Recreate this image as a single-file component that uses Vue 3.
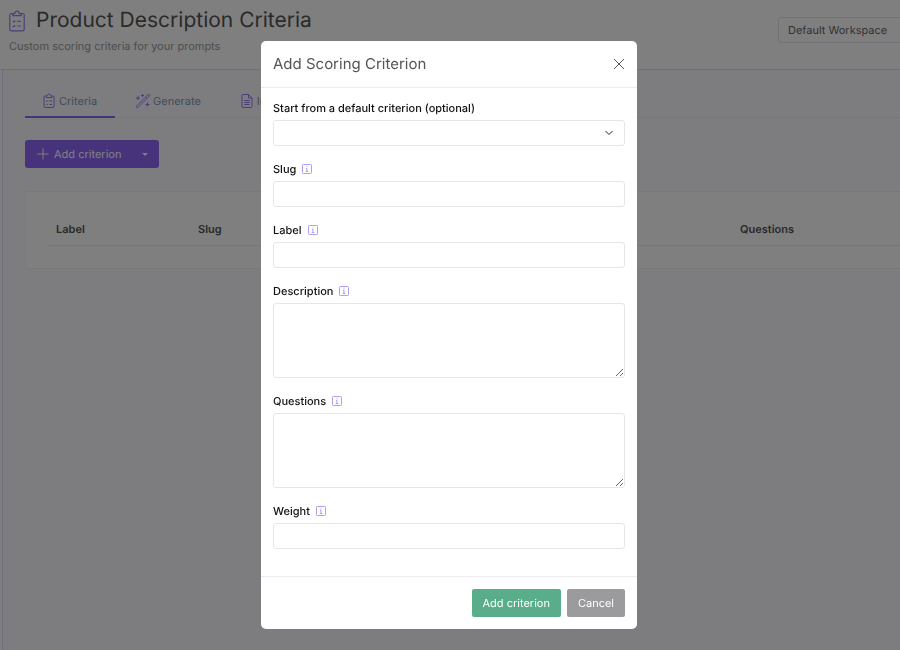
<template>
  <div class="app">
    <div class="page">
      <header class="page-header">
        <div>
          <h1 class="page-title">
            <svg class="title-icon" viewBox="0 0 16 22" aria-hidden="true">
              <path d="M4.500 3.500H2.500a1.700 1.700 0 0 0-1.700 1.700v14a1.700 1.700 0 0 0 1.700 1.700h11a1.700 1.700 0 0 0 1.700-1.700v-14a1.700 1.700 0 0 0-1.700-1.700H11.500M3.800 5.700V4.200L6 3.100a2 2 0 0 1 4 0l2.200 1.100v1.500zM4 11.400l.8.8 1.400-1.700M8.300 11.400h3.500M4 16l.8.8 1.400-1.700M8.300 16h3.500" />
            </svg>
            Product Description Criteria
          </h1>
          <p class="page-subtitle">Custom scoring criteria for your prompts</p>
        </div>
        <select class="workspace" aria-label="Workspace">
          <option>Default Workspace</option>
        </select>
      </header>

      <main class="content">
        <nav class="tabs">
          <a
            v-for="tab in tabs"
            :key="tab.name"
            href="#"
            class="tab"
            :class="tab.name === activeTab ? 'active' : ''"
            @click.prevent="activeTab = tab.name"
          >
            <svg class="tab-icon" viewBox="0 0 16 16" aria-hidden="true">
              <path :d="tab.icon" />
            </svg>
            {{ tab.name }}
          </a>
        </nav>

        <div class="split-button">
          <button type="button" class="split-main" @click="showModal = true">
            <svg class="plus" viewBox="0 0 12 12" aria-hidden="true">
              <path d="M6 .5v11M.5 6h11" />
            </svg>
            Add criterion
          </button>
          <button type="button" class="split-toggle" aria-label="More options">
            <span class="caret"></span>
          </button>
        </div>

        <section class="card">
          <table class="criteria-table">
            <thead>
              <tr>
                <th class="col-label">Label</th>
                <th class="col-slug">Slug</th>
                <th>Questions</th>
              </tr>
            </thead>
          </table>
        </section>
      </main>
    </div>

    <div v-if="showModal" class="backdrop">
      <form
        class="modal"
        role="dialog"
        aria-labelledby="modal-title"
        @submit.prevent="showModal = false"
      >
        <div class="modal-header">
          <h2 id="modal-title" class="modal-title">Add Scoring Criterion</h2>
          <button type="button" class="close" aria-label="Close" @click="showModal = false">
            <svg viewBox="0 0 12 12" aria-hidden="true">
              <path d="M1 1l10 10M11 1L1 11" />
            </svg>
          </button>
        </div>

        <div class="modal-body">
          <div class="field">
            <label for="template">Start from a default criterion (optional)</label>
            <div class="select-wrap">
              <select id="template" v-model="form.template" class="control">
                <option value=""></option>
              </select>
              <svg class="chevron" viewBox="0 0 10 6" aria-hidden="true">
                <path d="M1.500 1L5 4.500 8.500 1" />
              </svg>
            </div>
          </div>

          <div v-for="field in fields" :key="field.id" class="field">
            <label :for="field.id">
              {{ field.label }}
              <svg class="info" viewBox="0 0 10 10" aria-hidden="true">
                <rect x=".5" y=".5" width="9" height="9" rx=".8" />
                <path d="M5 2.300v1M4 4.500h1v3M3.700 7.500h2.600" />
              </svg>
            </label>
            <textarea
              v-if="field.multiline"
              :id="field.id"
              v-model="form[field.id]"
              class="control"
            ></textarea>
            <input v-else :id="field.id" v-model="form[field.id]" type="text" class="control" />
          </div>
        </div>

        <div class="modal-footer">
          <button type="submit" class="btn btn-success">Add criterion</button>
          <button type="button" class="btn btn-secondary" @click="showModal = false">
            Cancel
          </button>
        </div>
      </form>
    </div>
  </div>
</template>

<script setup>
import { reactive, ref } from "vue";

const tabs = [
  {
    name: "Criteria",
    icon: "M5.500 3H4a1 1 0 0 0-1 1v9.500a1 1 0 0 0 1 1h8a1 1 0 0 0 1-1V4a1 1 0 0 0-1-1h-1.500M5 4.500v-1.200l1.500-.8a1.500 1.500 0 0 1 3 0l1.500.8v1.200zM5 8l.7.7L6.800 7.400M8.300 8H11M5 11.500l.7.7 1.100-1.300M8.300 11.500H11",
  },
  {
    name: "Generate",
    icon: "M1.600 13L12.600 2q1.200-1 1.800-.4t-.4 1.800L3 14.400q-.8.6-1.400 0t0-1.400zM10.500 4.200l1.400 1.400M3 3v4M1 5h4M7.500 1v3M6 2.500h3M12.500 9.500v4M10.500 11.500h4",
  },
  {
    name: "Import",
    icon: "M9.500 1.500H4a1 1 0 0 0-1 1v11a1 1 0 0 0 1 1h8a1 1 0 0 0 1-1V5zM9.500 1.500V5H13M5.300 7.500h5.400M5.300 9.500h5.400M5.300 11.500h5.400",
  },
];
const activeTab = ref("Criteria");
const showModal = ref(true);

const fields = [
  { id: "slug", label: "Slug" },
  { id: "label", label: "Label" },
  { id: "description", label: "Description", multiline: true },
  { id: "questions", label: "Questions", multiline: true },
  { id: "weight", label: "Weight" },
];

const form = reactive({
  template: "",
  slug: "",
  label: "",
  description: "",
  questions: "",
  weight: "",
});
</script>

<style>
body {
  margin: 0;
}
</style>

<style scoped>
.app {
  height: 100vh;
  overflow: hidden;
  background: #fff;
  color: #555;
  font-family: Inter, "Liberation Sans", sans-serif;
  font-size: 11px;
  line-height: 16px;
  text-rendering: geometricPrecision;
}
.app * {
  box-sizing: border-box;
}
button,
input,
select,
textarea {
  font: inherit;
  text-rendering: inherit;
}
svg {
  fill: none;
  stroke: currentColor;
}

.page {
  display: flex;
  flex-direction: column;
  min-width: 1000px;
  min-height: 100%;
}
.page-header {
  display: flex;
  justify-content: space-between;
  align-items: flex-start;
  padding: 7px 12px 15px 9px;
  border-bottom: 1px solid #e2deff;
}
.page-title {
  display: flex;
  align-items: center;
  gap: 11px;
  margin: 0;
  font-size: 21px;
  font-weight: 400;
  line-height: 28px;
}
.title-icon {
  width: 16px;
  height: 22px;
  color: #9a7cf5;
  stroke-width: 1.2;
}
.page-subtitle {
  margin: 3px 0 0;
  color: #999;
}
.workspace {
  appearance: none;
  width: 210px;
  height: 26px;
  margin-top: 10px;
  padding: 0 9px;
  border: 1px solid #e6e6ea;
  border-radius: 3px;
  background: #fff;
  color: #666;
}

.content {
  flex: 1;
  margin-left: 2px;
  padding: 15px 12px 0 22px;
  border-left: 1px solid #e2deff;
  background: #fbfaff;
}
.tabs {
  display: flex;
  gap: 4px;
  border-bottom: 1px solid #efeff4;
}
.tab {
  display: flex;
  align-items: center;
  gap: 2px;
  height: 33px;
  margin-bottom: -1px;
  padding: 0 18px 0 16px;
  border-bottom: 2px solid transparent;
  color: #8098b4;
  text-decoration: none;
}
.tab.active {
  border-bottom-color: #8b68f0;
}
.tab-icon {
  width: 16px;
  height: 16px;
  color: #9a7cf5;
}
.split-button {
  display: flex;
  width: fit-content;
  margin-top: 22px;
  overflow: hidden;
  border-radius: 3px;
  background: #8f67f8;
}
.split-main,
.split-toggle {
  display: flex;
  align-items: center;
  height: 28px;
  border: 0;
  background: none;
  color: #fff;
}
.split-main {
  gap: 5px;
  padding: 0 10px 0 12px;
}
.split-toggle {
  padding: 0 11px;
}
.plus {
  width: 12px;
  height: 12px;
}
.caret {
  border: 3px solid transparent;
  border-top-color: #fff;
  border-bottom: 0;
}
.card {
  margin-top: 23px;
  padding: 21px 22px 22px;
  border: 1px solid #f3f3f6;
  border-radius: 2px;
  background: #fff;
}
.criteria-table {
  width: 100%;
  border-collapse: collapse;
  table-layout: fixed;
}
.criteria-table th {
  height: 32px;
  padding: 0 8px;
  border-bottom: 1px solid #f1f1f4;
  font-weight: 600;
  text-align: left;
}
.col-label {
  width: 142px;
}
.col-slug {
  width: 542px;
}

.backdrop {
  position: fixed;
  inset: 0;
  overflow: auto;
  padding-right: 2px;
  background: rgba(0, 0, 0, 0.5);
}
.modal {
  width: 376px;
  margin: 41px auto 20px;
  border-radius: 5px;
  background: #fff;
}
.modal-header {
  display: flex;
  justify-content: space-between;
  align-items: center;
  height: 47px;
  padding: 0 12px;
  border-bottom: 1px solid #ececf0;
}
.modal-title {
  margin: 0;
  font-size: 15px;
  font-weight: 400;
}
.close {
  width: 12px;
  height: 12px;
  padding: 0;
  border: 0;
  background: none;
  color: #555;
  cursor: pointer;
}
.close svg {
  display: block;
}
.modal-body {
  padding: 12px 12px 27px;
}
.field + .field {
  margin-top: 15px;
}
.field label {
  display: flex;
  align-items: center;
  gap: 6px;
  margin-bottom: 4px;
  color: #111;
  font-weight: 500;
}
.info {
  width: 10px;
  height: 10px;
  color: #b09cf7;
}
.select-wrap {
  position: relative;
}
.chevron {
  position: absolute;
  top: 10px;
  right: 11px;
  width: 10px;
  height: 6px;
  color: #222;
  pointer-events: none;
}
.control {
  appearance: none;
  display: block;
  width: 100%;
  height: 26px;
  padding: 4px 8px;
  border: 1px solid #e6e6ea;
  border-radius: 3px;
  background: #fff;
  color: #333;
}
textarea.control {
  height: 75px;
  resize: vertical;
}
.modal-footer {
  display: flex;
  justify-content: flex-end;
  gap: 6px;
  padding: 12px;
  border-top: 1px solid #ececf0;
}
.btn {
  height: 28px;
  padding: 0 11px;
  border: 0;
  border-radius: 2px;
  color: #fff;
  cursor: pointer;
}
.btn-success {
  background: #5aad8a;
}
.btn-secondary {
  background: #9b9b9d;
}
</style>
